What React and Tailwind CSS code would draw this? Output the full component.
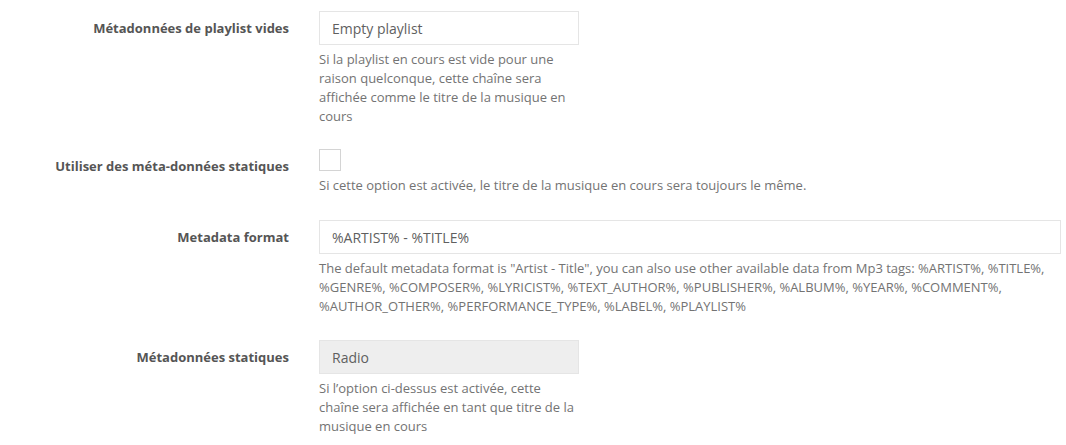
export default function App() {
    return (
        <div className="min-h-screen bg-white pt-[11px] text-[#555]" style={{fontFamily: '"Open Sans", "Liberation Sans", sans-serif'}}>
            <div className="flex">
                <label className="w-[289px] shrink-0 pt-[7px] text-right text-[13px] leading-[20px] font-bold text-[#555]">
                    Métadonnées de playlist vides
                </label>
                <div className="ml-[30px]">
                    <input
                        type="text"
                        defaultValue="Empty playlist"
                        className="block h-[34px] w-[260px] border border-[#e5e5e5] px-3 text-[14px] text-[#5f5f5f] outline-none"
                    />
                    <p className="mt-[5px] w-[260px] text-[13px] leading-[19px] text-[#737373]">
                        Si la playlist en cours est vide pour une raison quelconque, cette chaîne sera affichée comme le titre de la musique en cours
                    </p>
                </div>
            </div>

            <div className="mt-[23px] flex">
                <label className="w-[289px] shrink-0 pt-[7px] text-right text-[13px] leading-[20px] font-bold text-[#555]">
                    Utiliser des méta-données statiques
                </label>
                <div className="ml-[30px]">
                    <div className="h-[22px] w-[22px] border border-[#d4d4d4] bg-white"></div>
                    <p className="mt-[5px] text-[13px] leading-[19px] text-[#737373]">
                        Si cette option est activée, le titre de la musique en cours sera toujours le même.
                    </p>
                </div>
            </div>

            <div className="mt-[25px] flex">
                <label className="w-[289px] shrink-0 pt-[7px] text-right text-[13px] leading-[20px] font-bold text-[#555]">
                    Metadata format
                </label>
                <div className="ml-[30px] w-[742px]">
                    <input
                        type="text"
                        defaultValue="%ARTIST% - %TITLE%"
                        className="block h-[34px] w-full border border-[#e5e5e5] px-3 text-[14px] text-[#5f5f5f] outline-none"
                    />
                    <p className="mt-[5px] text-[13px] leading-[19px] text-[#737373]">
                        The default metadata format is "Artist - Title", you can also use other available data from Mp3 tags: %ARTIST%, %TITLE%, %GENRE%, %COMPOSER%, %LYRICIST%, %TEXT_AUTHOR%, %PUBLISHER%, %ALBUM%, %YEAR%, %COMMENT%, %AUTHOR_OTHER%, %PERFORMANCE_TYPE%, %LABEL%, %PLAYLIST%
                    </p>
                </div>
            </div>

            <div className="mt-[24px] flex">
                <label className="w-[289px] shrink-0 pt-[7px] text-right text-[13px] leading-[20px] font-bold text-[#555]">
                    Métadonnées statiques
                </label>
                <div className="ml-[30px]">
                    <input
                        type="text"
                        defaultValue="Radio"
                        disabled
                        className="block h-[34px] w-[260px] border border-[#e5e5e5] bg-[#eee] px-3 text-[14px] text-[#5f5f5f] outline-none"
                    />
                    <p className="mt-[5px] w-[260px] text-[13px] leading-[19px] text-[#737373]">
                        Si l’option ci-dessus est activée, cette chaîne sera affichée en tant que titre de la musique en cours
                    </p>
                </div>
            </div>
        </div>
    );
}
